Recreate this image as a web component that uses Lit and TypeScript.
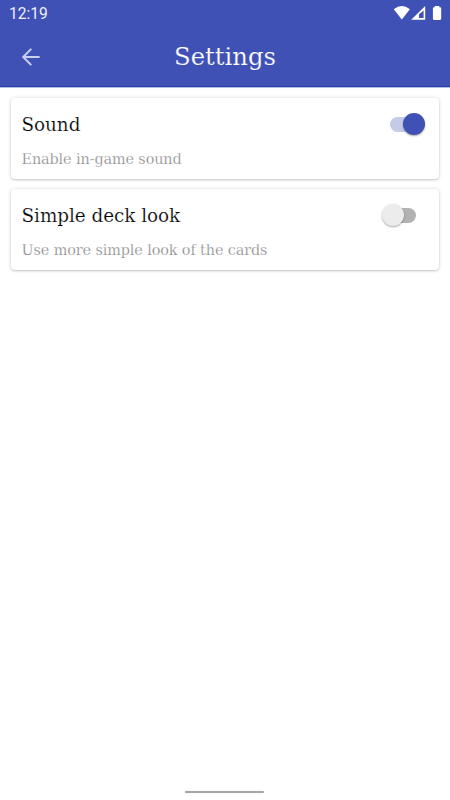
import { LitElement, html, css } from "lit";
import { customElement, property } from "lit/decorators.js";

@customElement("toggle-switch")
class ToggleSwitch extends LitElement {
  @property({ type: Boolean, reflect: true }) on = false;
  static styles = css`
    :host { display: flex; align-items: center; width: 42px; height: 24px; }
    .track {
      display: flex; align-items: center; width: 26px; height: 15px;
      border-radius: 8px; background: #b2b2b2;
    }
    .thumb {
      flex: none; width: 22px; height: 22px; border-radius: 50%;
      margin-left: -8.5px; background: #ececec;
      box-shadow: 0 1px 2px rgba(0, 0, 0, 0.35);
    }
    :host([on]) .track { background: #c5cae9; }
    :host([on]) .thumb { margin-left: 12.5px; background: #3f51b5; }
  `;
  render() {
    return html`<div class="track"><div class="thumb"></div></div>`;
  }
}

@customElement("setting-card")
class SettingCard extends LitElement {
  @property() heading = "";
  @property() detail = "";
  @property({ type: Boolean }) on = false;
  static styles = css`
    :host {
      display: block; box-sizing: border-box; height: 81px; padding: 14px 7px 0 11px;
      border-radius: 4px; background: #fff;
      box-shadow: 0 1px 2px rgba(0, 0, 0, 0.17), 0 0 4px rgba(0, 0, 0, 0.13);
    }
    .row { display: flex; justify-content: space-between; align-items: center; height: 24px; }
    .heading { padding-top: 2px; font-size: 18.4px; line-height: 24px; letter-spacing: -0.05px; color: #000; -webkit-text-stroke: 0.2px #fff; white-space: nowrap; }
    .detail { margin-top: 13px; font-size: 14.4px; line-height: 20px; letter-spacing: -0.11px; color: #858585; -webkit-text-stroke: 0.25px #fff; white-space: nowrap; }
  `;
  render() {
    return html`
      <div class="row">
        <div class="heading">${this.heading}</div>
        <toggle-switch ?on=${this.on}></toggle-switch>
      </div>
      <div class="detail">${this.detail}</div>
    `;
  }
}

@customElement("app-root")
class AppRoot extends LitElement {
  static styles = css`
    :host {
      display: flex; flex-direction: column; box-sizing: border-box;
      height: 800px; width: 450px; overflow: hidden; background: #fff;
      font-family: "DejaVu Serif", serif;
    }
    header { flex: none; height: 87px; background: #3f51b5; color: #fff; box-shadow: 0 1px 0 #b3bce6, inset 0 -1px 0 #2b3eae; }
    .status { display: flex; justify-content: space-between; height: 27px; padding-left: 9px; }
    .time { font: 15.6px/29px Roboto, sans-serif; color: #eef0fb; }
    .icons { width: 56px; height: 27px; }
    .bar { display: grid; grid-template-columns: 62px 1fr 62px; align-items: center; height: 60px; }
    .back { width: 20px; height: 20px; margin-left: 21px; }
    h1 { margin: 0; text-align: center; font-size: 24.3px; line-height: 32px; font-weight: 400; -webkit-text-stroke: 0.2px #3f51b5; }
    main { flex: 1; display: flex; flex-direction: column; gap: 10px; padding: 11px 11px 0 10.5px; }
    .home { flex: none; align-self: center; width: 79px; height: 2px; margin: 0 1px 7px 0; background: #a6a6a6; border-radius: 1px; box-shadow: 0 0 1px #ccc; }
  `;
  render() {
    return html`
      <header>
        <div class="status">
          <div class="time">12:19</div>
          <svg class="icons" viewBox="394 0 56 27" fill="#fff">
            <path d="M393.8 9.2Q401.8 3 409.9 9.2L401.8 19.5Z" />
            <path fill-rule="evenodd" d="M411.2 19.8L425.2 6V19.8ZM419 18H423.6V10.6L419 14.2Z" />
            <path d="M434.7 7.3V6H439.3V7.3H440Q441.2 7.3 441.2 8.5V18.6Q441.2 20 440 20H434Q432.9 20 432.9 18.6V8.5Q432.9 7.3 434 7.3Z" />
          </svg>
        </div>
        <div class="bar">
          <svg class="back" viewBox="0 0 20 20" fill="none" stroke="#c9cff0" stroke-width="2">
            <path d="M18.6 10H2.4M10.3 1.9L2.2 10L10.3 18.1" />
          </svg>
          <h1>Settings</h1>
        </div>
      </header>
      <main>
        <setting-card heading="Sound" detail="Enable in-game sound" on></setting-card>
        <setting-card heading="Simple deck look" detail="Use more simple look of the cards"></setting-card>
      </main>
      <div class="home"></div>
    `;
  }
}
